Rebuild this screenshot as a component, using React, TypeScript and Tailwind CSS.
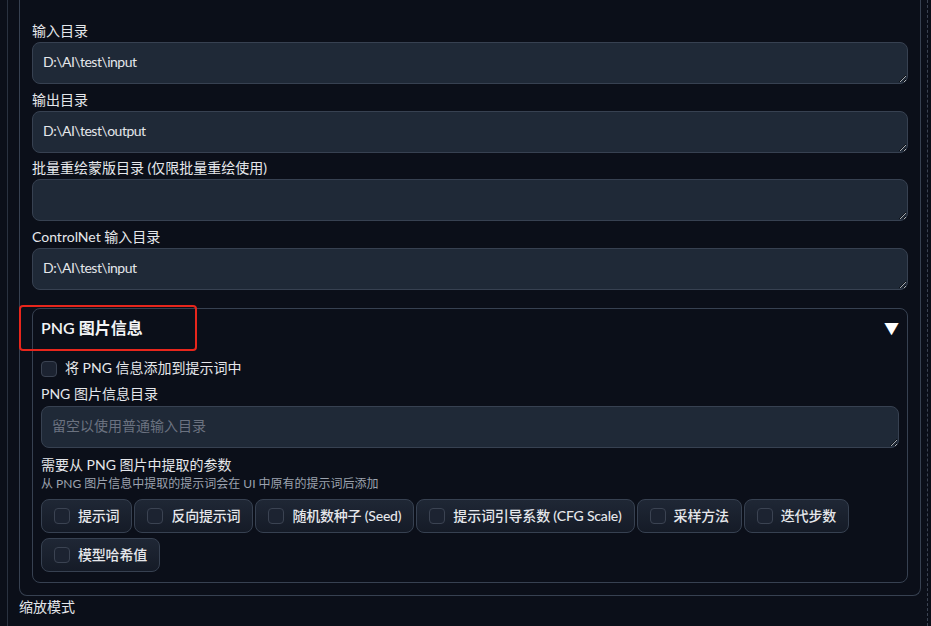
import React from "react";

const dirFields = [
  { label: "输入目录", value: "D:\\AI\\test\\input" },
  { label: "输出目录", value: "D:\\AI\\test\\output" },
  { label: "批量重绘蒙版目录 (仅限批量重绘使用)", value: "" },
  { label: "ControlNet 输入目录", value: "D:\\AI\\test\\input" },
];

const params = [
  "提示词",
  "反向提示词",
  "随机数种子 (Seed)",
  "提示词引导系数 (CFG Scale)",
  "采样方法",
  "迭代步数",
  "模型哈希值",
];

function Box() {
  return (
    <span className="h-4 w-4 shrink-0 rounded-[4px] border border-[#3b4352] bg-[#1c2331]" />
  );
}

function Area({ value, placeholder }: { value?: string; placeholder?: string }) {
  return (
    <textarea
      readOnly
      defaultValue={value}
      placeholder={placeholder}
      className={
        "block h-[42px] w-full resize-y rounded-lg border border-[#374151] bg-[#1f2937] px-[10px] py-[9px] text-sm leading-5 text-[#e5e7eb] outline-none [color-scheme:dark] placeholder:text-[#6b7280] " +
        (value ? "tracking-[-0.5px]" : "")
      }
    />
  );
}

export default function App() {
  return (
    <div className="relative h-[626px] w-[931px] overflow-hidden bg-[#0b0f19] font-['Lato','Noto_Sans_CJK_SC',sans-serif] text-[#e5e7eb]">
      <div className="flex h-full w-[928px] border-r border-dashed border-r-[#3b4352]">
        <div className="ml-[7px] flex h-full flex-1 flex-col border-l border-[#2a3240] pl-[11px] pr-[6px]">
          <div className="rounded-b-lg border-x border-b border-[#374151] px-3 pt-[21px] pb-3">
            <div className="flex flex-col gap-[5.7px]">
              {dirFields.map((f) => (
                <div key={f.label} className="flex flex-col">
                  <span className="text-sm leading-5">{f.label}</span>
                  <div className="mt-[1px]">
                    <Area value={f.value} />
                  </div>
                </div>
              ))}
            </div>

            <div className="mt-[18px] rounded-lg border border-[#374151] px-2 pb-[10px]">
              <div className="flex h-[37px] items-center justify-between">
                <span className="text-base font-semibold text-[#f3f4f6]">PNG 图片信息</span>
                <span className="mt-[2px] text-[15px] leading-none text-white">▼</span>
              </div>

              <label className="mt-[13px] flex h-5 items-center gap-2 text-sm">
                <Box />
                <span className="-mt-[2px]">将 PNG 信息添加到提示词中</span>
              </label>

              <div className="mt-[5px] text-sm leading-5">PNG 图片信息目录</div>
              <div className="mt-[2px]">
                <Area placeholder="留空以使用普通输入目录" />
              </div>

              <div className="mt-[7px] text-sm leading-5">需要从 PNG 图片中提取的参数</div>
              <div className="mt-[1px] text-xs leading-4 text-[#9ca3af]">
                从 PNG 图片信息中提取的提示词会在 UI 中原有的提示词后添加
              </div>

              <div className="mt-[7px] flex flex-wrap gap-x-[2px] gap-y-[5px]">
                {params.map((p) => (
                  <label
                    key={p}
                    className="flex h-[34px] items-center gap-2 rounded-lg border border-[#374151] bg-gradient-to-b from-[#1f2735] to-[#151b27] px-3 text-sm font-medium tracking-[-0.2px]"
                  >
                    <Box />
                    <span className="-mt-[1px]">{p}</span>
                  </label>
                ))}
              </div>
            </div>
          </div>

          <div className="mt-[1px] text-sm leading-5">缩放模式</div>
        </div>
      </div>

      <div className="pointer-events-none absolute left-[19px] top-[305px] h-[46px] w-[178px] rounded-[4px] border-2 border-[#e8261c]" />
    </div>
  );
}
